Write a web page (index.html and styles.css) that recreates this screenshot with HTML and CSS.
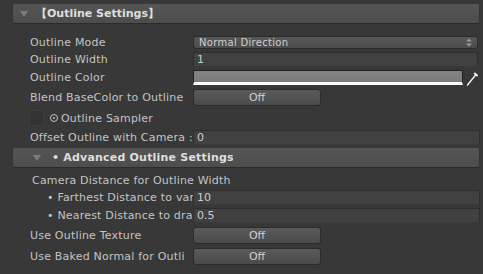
FILE: index.html
```html
<!DOCTYPE html>
<html lang="en">
<head>
    <meta charset="UTF-8">
    <title>Outline Settings</title>
    <link rel="stylesheet" href="styles.css">
</head>
<body>
    <div class="inspector">
        <div class="foldout first">
            <span class="arrow"></span>
            <span class="foldout-title">【Outline Settings】</span>
        </div>

        <div class="row r-mode">
            <span class="label">Outline Mode</span>
            <div class="popup">
                <span>Normal Direction</span>
                <svg class="popup-arrows" width="6" height="9" viewBox="0 0 6 9">
                    <path d="M0 3.5 L3 0.5 L6 3.5 Z M0 5.5 L3 8.5 L6 5.5 Z" fill="#9a9a9a"/>
                </svg>
            </div>
        </div>

        <div class="row r-width">
            <span class="label">Outline Width</span>
            <div class="field">1</div>
        </div>

        <div class="row r-color">
            <span class="label">Outline Color</span>
            <div class="color-swatch"></div>
            <svg class="picker" width="12" height="14" viewBox="0 0 12 14">
                <path d="M1.5 13 L10 2.5" stroke="#f2f2f2" stroke-width="1.4" stroke-linecap="round"/>
                <path d="M8.8 1.6 L11 3.4" stroke="#f2f2f2" stroke-width="2" stroke-linecap="round"/>
            </svg>
        </div>

        <div class="row r-blend">
            <span class="label">Blend BaseColor to Outline</span>
            <div class="toggle-btn">Off</div>
        </div>

        <div class="row r-sampler">
            <span class="checkbox"></span>
            <span class="sampler-label"><span class="ring"></span>Outline Sampler</span>
        </div>

        <div class="row r-offset">
            <span class="label">Offset Outline with Camera :</span>
            <div class="field wide">0</div>
        </div>

        <div class="foldout second">
            <span class="arrow"></span>
            <span class="foldout-title">• Advanced Outline Settings</span>
        </div>

        <div class="row r-camera">
            <span class="sub-heading">Camera Distance for Outline Width</span>
        </div>

        <div class="row r-far">
            <span class="label bullet">• Farthest Distance to var</span>
            <div class="field wide">10</div>
        </div>

        <div class="row r-near">
            <span class="label bullet">• Nearest Distance to dra</span>
            <div class="field wide">0.5</div>
        </div>

        <div class="row r-texture">
            <span class="label">Use Outline Texture</span>
            <div class="toggle-btn">Off</div>
        </div>

        <div class="row r-baked">
            <span class="label">Use Baked Normal for Outli</span>
            <div class="toggle-btn">Off</div>
        </div>
    </div>
</body>
</html>
```

FILE: styles.css
```css
body {
    margin: 0;
    background-color: #383838;
    font-family: "DejaVu Sans", Verdana, sans-serif;
    font-size: 11px;
    color: #c4c4c4;
}
.inspector {
    display: flex;
    flex-direction: column;
    width: 483px;
    height: 274px;
    overflow: hidden;
}
.foldout {
    display: flex;
    align-items: center;
    height: 19px;
    margin-left: 13px;
    margin-right: 4px;
    background: linear-gradient(#555555, #4d4d4d);
    border-radius: 2px;
    box-shadow: 0 1px 1px #2b2b2b;
}
.foldout.first {
    margin-top: 4px;
    margin-bottom: 10px;
    padding-left: 7px;
}
.foldout.second {
    margin-top: 1px;
    padding-left: 20px;
}
.arrow {
    width: 0;
    height: 0;
    border-left: 4px solid transparent;
    border-right: 4px solid transparent;
    border-top: 6px solid #7c7c7c;
    margin-right: 8px;
}
.foldout.second .arrow {
    margin-right: 11px;
}
.foldout-title {
    font-weight: bold;
    color: #dedede;
    letter-spacing: 0;
}
.foldout.second .foldout-title {
    letter-spacing: 0.2px;
}
.row {
    display: flex;
    align-items: center;
    padding-left: 30px;
}
.label {
    flex: 0 0 163px;
    white-space: nowrap;
    overflow: hidden;
    letter-spacing: 0.2px;
}
.label.bullet {
    padding-left: 17px;
    box-sizing: border-box;
}
.r-mode { height: 18px; }
.r-width { height: 17px; }
.r-color { height: 19px; }
.r-blend { height: 21px; }
.r-sampler { height: 20px; padding-left: 29px; }
.r-offset { height: 19px; }
.r-camera {
    height: 21px;
    padding-left: 32px;
    align-items: flex-end;
    padding-bottom: 1px;
    box-sizing: border-box;
}
.r-far { height: 18px; }
.r-near { height: 18px; }
.r-texture { height: 22px; }
.r-baked { height: 21px; }

.popup {
    display: flex;
    align-items: center;
    justify-content: space-between;
    width: 285px;
    height: 13px;
    padding: 0 5px 0 5px;
    box-sizing: border-box;
    border: 1px solid #2c2c2c;
    border-radius: 3px;
    background: linear-gradient(#575757, #4c4c4c);
    color: #cfcfcf;
    font-size: 10px;
    letter-spacing: 0.3px;
}
.field {
    width: 285px;
    height: 15px;
    line-height: 14px;
    box-sizing: border-box;
    padding-left: 3px;
    border: 1px solid #2e2e2e;
    border-bottom-color: #3a3a3a;
    background-color: #414141;
    color: #cccccc;
}
.field.wide {
    width: 287px;
}
.color-swatch {
    width: 270px;
    height: 15px;
    box-sizing: border-box;
    border: 1px solid #202020;
    border-bottom: 3px solid #ffffff;
    background: linear-gradient(#858585, #7b7b7b);
}
.picker {
    margin-left: 3px;
    margin-top: 3px;
}
.toggle-btn {
    width: 128px;
    height: 17px;
    line-height: 16px;
    box-sizing: border-box;
    text-align: center;
    border: 1px solid #2b2b2b;
    border-radius: 3px;
    background: linear-gradient(#5a5a5a, #4b4b4b);
    color: #d0d0d0;
}
.checkbox {
    width: 15px;
    height: 16px;
    box-sizing: border-box;
    border: 1px solid #3c3c3c;
    background-color: #333333;
    margin-right: 6px;
}
.sampler-label {
    display: flex;
    align-items: center;
    letter-spacing: 0.2px;
}
.ring {
    width: 6px;
    height: 6px;
    border: 1px solid #c4c4c4;
    border-radius: 50%;
    margin-right: 3px;
    position: relative;
}
.ring::after {
    content: "";
    position: absolute;
    left: 2px;
    top: 2px;
    width: 2px;
    height: 2px;
    border-radius: 50%;
    background-color: #c4c4c4;
}
.sub-heading {
    letter-spacing: 0.2px;
}
```
